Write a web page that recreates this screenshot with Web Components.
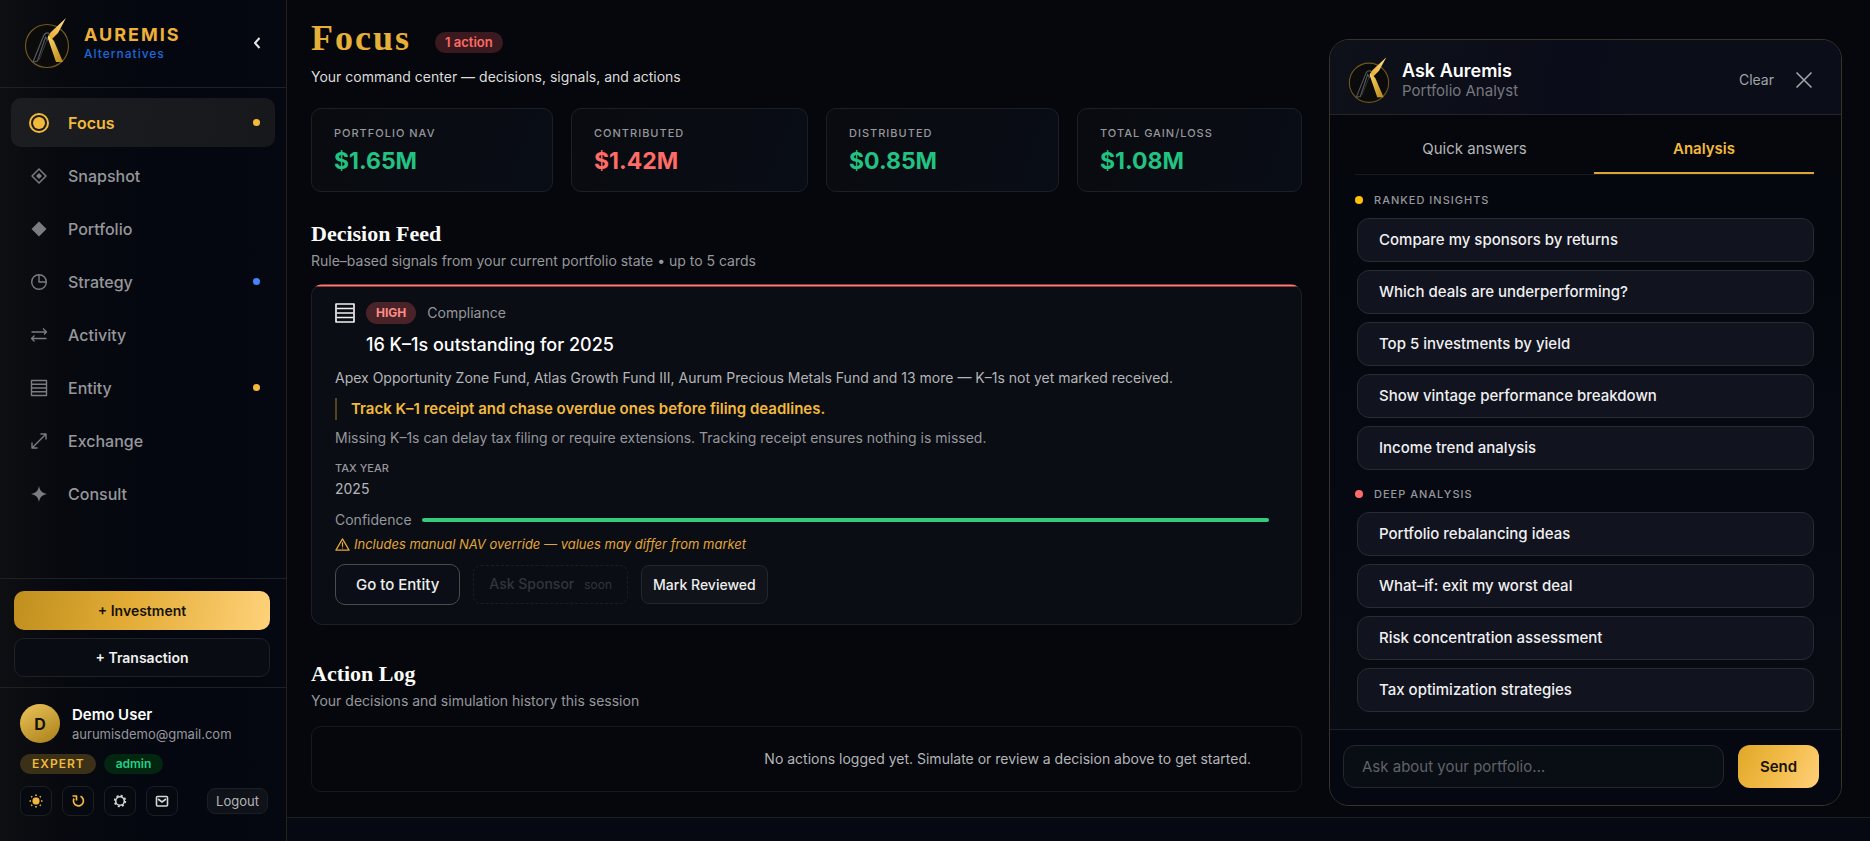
<!DOCTYPE html>
<html lang="en">
<head>
<meta charset="utf-8">
<meta name="viewport" content="width=device-width, initial-scale=1">
<title>Auremis Alternatives – Focus</title>
<style>
:root {
  --gold: #f3b93b;
  --red: #ff6b66;
  --green: #22c282;
  --text: #f1f1ef;
  --soft: #b4b5b7;
  --muted: #96979b;
  --line: #1d2024;
  --sans: Inter, "Noto Sans", sans-serif;
  --serif: "Liberation Serif", "Times New Roman", serif;
}
html { background: #05070c; }
body {
  margin: 0;
  font: 400 14px/20px var(--sans);
  color: var(--text);
  -webkit-font-smoothing: antialiased;
}
</style>
</head>
<body>
<auremis-app></auremis-app>

<script>
const define = (name, html) => {
  const template = document.createElement('template');
  template.innerHTML = '<style>*,*::before{box-sizing:border-box}button,input{font:inherit;color:inherit;margin:0}button{cursor:pointer}svg{display:block}</style>' + html;
  customElements.define(name, class extends HTMLElement {
    constructor() {
      super();
      this.attachShadow({ mode: 'open' }).append(template.content.cloneNode(true));
    }
  });
};

/* Single icon element; the glyph is picked with the "name" attribute. */
const ICONS = {
  focus: '<circle cx="12" cy="12" r="9" stroke-width="2"/><circle cx="12" cy="12" r="6" fill="currentColor" stroke="none"/>',
  snapshot: '<path d="M12 5l7 7-7 7-7-7z" stroke-width="1.5"/><path d="M12 9l3 3-3 3-3-3z" fill="currentColor" stroke="none"/>',
  portfolio: '<path d="M12 4.5l7.5 7.5-7.5 7.5L4.500 12z" fill="currentColor" stroke="none"/>',
  strategy: '<circle cx="12" cy="12" r="7.3"/><path d="M12 4.700V12h7.300"/>',
  activity: '<path d="M4.500 9H19.500M16 5.500L19.500 9l-2.500 2.500M19.500 15.500H4.500M7.500 12.500l-3 3 3 3" stroke-width="1.3"/>',
  entity: '<path d="M4.500 4.500h15v15h-15zM4.500 8.200h15M4.500 12h15M4.500 15.800h15"/>',
  exchange: '<path d="M5 19L19 5M13.500 5H19v5.500M5 13.500V19h5.500"/>',
  consult: '<path d="M12 4c1 5 3 7 8 8-5 1-7 3-8 8-1-5-3-7-8-8 5-1 7-3 8-8z" fill="currentColor" stroke="none"/>',
  chevron: '<path d="M13.500 7L9 12l4.500 5" stroke-width="2"/>',
  sun: '<rect x="9" y="9" width="6" height="6" rx="2" fill="currentColor" stroke-width="1"/><path d="M12 5.500v1.500M12 17v1.500M5.500 12h1.500M17 12h1.500M7.200 7.200l1 1M15.800 15.800l1 1M16.800 7.200l-1 1M8.200 15.800l-1 1" stroke-width="1.600"/>',
  refresh: '<path d="M8 9.500a5 5 0 1 0 6.500-2.200" stroke-width="1.700"/><path d="M6.500 7h4v4.500" stroke-width="1.700"/>',
  gear: '<circle cx="12" cy="12" r="4.300" stroke-width="1.600"/><circle cx="12" cy="12" r="5.400" stroke-width="1.600" stroke-dasharray="2.100 2.140"/>',
  mail: '<rect x="6.500" y="7.500" width="11" height="9.500" rx="1" stroke-width="1.600"/><path d="M8 10l4 3 4-3" stroke-width="1.600"/>',
  list: '<path d="M1.200 1.200h21.600v21.600H1.200z" stroke-width="2"/><path d="M2 6.600h20M2 12h20M2 17.400h20" stroke-width="2"/>',
  warning: '<path d="M12 3L22.500 21h-21z" stroke-width="2"/><path d="M12 8.500v7M12 17v1.500" stroke-width="2"/>',
  close: '<path d="M4.500 4.500l15 15M19.500 4.500l-15 15" stroke-width="1.600"/>'
};
customElements.define('au-icon', class extends HTMLElement {
  constructor() {
    super();
    this.attachShadow({ mode: 'open' });
  }
  connectedCallback() {
    this.shadowRoot.innerHTML = `<style>:host{display:block;width:24px;height:24px;flex:none}svg{display:block;width:100%;height:100%}</style>
      <svg viewBox="0 0 24 24" fill="none" stroke="currentColor" stroke-width="1.400" stroke-linejoin="round" aria-hidden="true">${ICONS[this.getAttribute('name')]}</svg>`;
  }
});

/* Brand mark: ringed "A" with a gold blade. */
define('au-logo', `
<style>:host{display:block;width:46px;height:52px;flex:none}svg{width:100%;height:100%}</style>
<svg viewBox="0 0 46 52" fill="none" aria-hidden="true">
  <defs>
    <linearGradient id="a" x1="0" y1="1" x2="1" y2="0"><stop offset="0" stop-color="#e9a92f"/><stop offset="1" stop-color="#ffe48c"/></linearGradient>
    <linearGradient id="b" x1="0" y1="0" x2="1" y2="1"><stop offset="0" stop-color="#ffd766"/><stop offset="1" stop-color="#b98718"/></linearGradient>
  </defs>
  <circle cx="23" cy="29" r="21.500" fill="#0b0b0c" stroke="#6e5720" stroke-width="1.200"/>
  <path d="M9 45L19.500 19q1.500-3.500 5-3l2 3-3 4-2-3-8 24z" stroke="#55585c" stroke-width="1.200"/>
  <path d="M15 43l8-20" stroke="#35383c"/>
  <path d="M42 1L27 15q-3 3-1 5l2 2 6-6z" fill="url(#a)"/>
  <path d="M24.500 18q-1.500 2.500 0 5L32 45h7L30 24q-2-2.500-5.500-6z" fill="url(#b)"/>
</svg>`);

define('au-nav-item', `
<style>
:host{display:block;color:var(--muted)}
a{display:flex;align-items:center;gap:17px;height:49px;padding:0 15px 0 16px;border-radius:10px;color:inherit;text-decoration:none;font-size:16px;font-weight:500}
.label{flex:1}
::slotted(au-icon){color:#7b7c80}
i{display:none;width:7px;height:7px;border-radius:50%;background:var(--gold)}
:host([dot]) i{display:block}
:host([dot=blue]) i{background:#4286f7}
:host([active]){color:var(--gold)}
:host([active]) ::slotted(au-icon){color:var(--gold)}
:host([active]) a{background:linear-gradient(100deg,#1c1d20,#16181b);font-weight:600}
</style>
<a href="#"><slot name="icon"></slot><span class="label"><slot></slot></span><i></i></a>`);

define('au-sidebar', `
<style>
:host{display:flex;flex-direction:column;border-right:1px solid #24211f;background:linear-gradient(90deg,#0e0f12 0,#07090f 22%,#040710 60%,#050811)}
header{display:flex;align-items:center;gap:14px;height:88px;padding:0 16px 2px 24px;border-bottom:1px solid var(--line)}
header div{flex:1}
.brand{font:700 18px/22px var(--sans);letter-spacing:2px;color:#eeb03a}
.sub{font:500 12px/16px var(--sans);letter-spacing:1px;color:#1c69dc}
.fold{padding:0;border:0;background:none;color:#e6e6e6}
nav{display:flex;flex-direction:column;gap:4px;flex:1;padding:10px 11px}
.actions{display:flex;flex-direction:column;gap:8px;padding:12px 16px 10px 14px;border-top:1px solid var(--line);border-bottom:1px solid var(--line)}
.actions button{height:39px;border-radius:10px;border:1px solid #1e2227;background:#090c13;font-size:14px;font-weight:600}
.actions .primary{border:0;background:linear-gradient(100deg,#bf8f1e,#e3ac36 45%,#ffd27a);color:#16130a}
.profile{height:153px;padding:16px 18px 0 20px}
.who{display:flex;align-items:center;gap:12px}
.avatar{display:grid;place-items:center;width:40px;height:39px;border-radius:50%;background:linear-gradient(150deg,#ecc45c,#a97f16);color:#15120a;font-size:16px;font-weight:700}
.name{font-size:15px;font-weight:600;line-height:20px;color:#fff}
.mail{font-size:13px;line-height:18px;color:var(--muted)}
.tags{display:flex;gap:8px;margin-top:11px}
.tags span{height:20px;padding:0 12px;border-radius:10px;font-size:12px;line-height:20px;font-weight:600;background:#3a3118;color:var(--gold)}
.tags .role{letter-spacing:1px;padding-right:11px}
.tags .admin{background:#02260f;color:#26cf87}
.tools{display:flex;align-items:center;gap:10px;margin-top:12px}
.tools button{display:grid;place-items:center;width:32px;height:30px;padding:0;border-radius:8px;border:1px solid #1b1f24;background:#06090f;color:#d5d5d5}
.tools .gold{color:var(--gold)}
.tools .logout{width:61px;height:26px;margin-left:auto;font-size:13px;background:#101219;color:var(--soft)}
</style>
<header>
  <au-logo></au-logo>
  <div><div class="brand">AUREMIS</div><div class="sub">Alternatives</div></div>
  <button class="fold" aria-label="Collapse sidebar"><au-icon name="chevron"></au-icon></button>
</header>
<nav aria-label="Main">
  <au-nav-item active dot><au-icon slot="icon" name="focus"></au-icon>Focus</au-nav-item>
  <au-nav-item><au-icon slot="icon" name="snapshot"></au-icon>Snapshot</au-nav-item>
  <au-nav-item><au-icon slot="icon" name="portfolio"></au-icon>Portfolio</au-nav-item>
  <au-nav-item dot="blue"><au-icon slot="icon" name="strategy"></au-icon>Strategy</au-nav-item>
  <au-nav-item><au-icon slot="icon" name="activity"></au-icon>Activity</au-nav-item>
  <au-nav-item dot><au-icon slot="icon" name="entity"></au-icon>Entity</au-nav-item>
  <au-nav-item><au-icon slot="icon" name="exchange"></au-icon>Exchange</au-nav-item>
  <au-nav-item><au-icon slot="icon" name="consult"></au-icon>Consult</au-nav-item>
</nav>
<div class="actions">
  <button class="primary">+ Investment</button>
  <button>+ Transaction</button>
</div>
<div class="profile">
  <div class="who"><div class="avatar">D</div><div><div class="name">Demo User</div><div class="mail">aurumisdemo@gmail.com</div></div></div>
  <div class="tags"><span class="role">EXPERT</span><span class="admin">admin</span></div>
  <div class="tools">
    <button class="gold" aria-label="Theme"><au-icon name="sun"></au-icon></button>
    <button class="gold" aria-label="Refresh"><au-icon name="refresh"></au-icon></button>
    <button aria-label="Settings"><au-icon name="gear"></au-icon></button>
    <button aria-label="Messages"><au-icon name="mail"></au-icon></button>
    <button class="logout">Logout</button>
  </div>
</div>`);

define('au-stat', `
<style>
:host{display:flex;flex-direction:column;justify-content:center;gap:6px;height:84px;padding:0 22px;border:1px solid #1c1f25;border-radius:10px;background:linear-gradient(110deg,#090b0f,#090d16)}
.label{font:500 11px/16px var(--sans);letter-spacing:1px;color:var(--muted)}
.value{font:700 23px/28px var(--sans);color:var(--green)}
:host([negative]) .value{color:var(--red)}
</style>
<div class="label"><slot name="label"></slot></div><div class="value"><slot></slot></div>`);

define('au-section-head', `
<style>
:host{display:block}
h2{margin:0;font:700 22px/28px var(--serif);color:#fbfbf8}
p{margin:3px 0 0;color:var(--muted)}
</style>
<h2><slot></slot></h2><p><slot name="note"></slot></p>`);

define('au-decision-card', `
<style>
:host{display:block;overflow:hidden;border-radius:12px;box-shadow:inset 0 0 0 1px #1c1f24;background:#0a0d14}
.accent{height:3px;background:linear-gradient(#8f3a3a 33%,#f4807b 33% 66%,#8f3a3a 66%)}
.body{padding:15px 33px 20px 24px}
.top{display:flex;align-items:center;gap:11px;height:22px}
.top au-icon{width:20px;height:20px}
.high{padding:0 10px;border-radius:11px;background:#4a2328;color:#ff8c86;font-size:12px;line-height:22px;font-weight:700}
.cat{color:var(--muted)}
h3{margin:9px 0 11px 31px;font-size:18px;line-height:24px;font-weight:500;color:#fff}
p{margin:0;color:var(--soft)}
.track{margin:10px 0 8px;padding-left:14px;border-left:2px solid #5a431a;font-size:15px;line-height:22px;font-weight:600;color:var(--gold)}
.why{color:var(--muted)}
dl{margin:12px 0 11px}
dt{font:500 11px/16px var(--sans);color:var(--muted)}
dd{margin:3px 0 0;color:var(--soft)}
.conf{display:flex;align-items:center;gap:10px;color:var(--muted)}
.meter{flex:1;height:4px;border-radius:2px;background:#34cb7f}
.warn{display:flex;align-items:center;gap:4px;margin-top:4px;font-size:13px;font-style:italic;color:#e2a637}
.warn au-icon{width:15px;height:15px}
.buttons{display:flex;align-items:center;gap:13px;margin-top:10px}
button{height:39px;padding:0 11px;border:1px solid #23272d;border-radius:8px;background:#10131a;font-weight:500;font-size:14px;color:#eeeeec}
.go{height:41px;padding:0 20px;border-color:#484b50;border-radius:10px;background:#0b0e16;font-size:15px}
.ask{padding:0 15px;border:1px dashed #1b1e23;background:none;color:#32353b;cursor:default}
.ask small{margin-left:10px;font-size:12px;font-weight:400}
</style>
<div class="accent"></div>
<div class="body">
  <div class="top"><au-icon name="list"></au-icon><span class="high">HIGH</span><span class="cat">Compliance</span></div>
  <h3>16 K–1s outstanding for 2025</h3>
  <p>Apex Opportunity Zone Fund, Atlas Growth Fund III, Aurum Precious Metals Fund and 13 more — K–1s not yet marked received.</p>
  <p class="track">Track K–1 receipt and chase overdue ones before filing deadlines.</p>
  <p class="why">Missing K–1s can delay tax filing or require extensions. Tracking receipt ensures nothing is missed.</p>
  <dl><dt>TAX YEAR</dt><dd>2025</dd></dl>
  <div class="conf"><span>Confidence</span><div class="meter" role="meter" aria-label="Confidence" aria-valuenow="100"></div></div>
  <div class="warn"><au-icon name="warning"></au-icon><span>Includes manual NAV override — values may differ from market</span></div>
  <div class="buttons"><button class="go">Go to Entity</button><button class="ask" disabled>Ask Sponsor<small>soon</small></button><button>Mark Reviewed</button></div>
</div>`);

define('au-focus-view', `
<style>
:host{display:block;padding:16px 0 24px}
.title{display:flex;align-items:flex-start;gap:24px}
h1{margin:0;font:700 36px/44px var(--serif);letter-spacing:2px;color:#e5af38}
.count{margin-top:16px;padding:0 10px;border-radius:11px;background:#3b1a1f;color:var(--red);font-size:13px;line-height:21px;font-weight:600}
.lead{margin:7px 0 21px;color:#dcdcda}
.stats{display:grid;grid-template-columns:242fr 237fr 233fr 225fr;gap:18px}
au-section-head{margin:28px 0 13px}
au-section-head.log{margin:35px 0 15px}
.empty{display:flex;align-items:center;justify-content:flex-end;height:66px;padding-right:50px;border:1px solid #16191d;border-radius:10px;color:var(--soft)}
</style>
<div class="title"><h1>Focus</h1><span class="count">1 action</span></div>
<p class="lead">Your command center — decisions, signals, and actions</p>
<div class="stats">
  <au-stat><span slot="label">PORTFOLIO NAV</span>$1.65M</au-stat>
  <au-stat negative><span slot="label">CONTRIBUTED</span>$1.42M</au-stat>
  <au-stat><span slot="label">DISTRIBUTED</span>$0.85M</au-stat>
  <au-stat><span slot="label">TOTAL GAIN/LOSS</span>$1.08M</au-stat>
</div>
<au-section-head>Decision Feed<span slot="note">Rule–based signals from your current portfolio state • up to 5 cards</span></au-section-head>
<au-decision-card></au-decision-card>
<au-section-head class="log">Action Log<span slot="note">Your decisions and simulation history this session</span></au-section-head>
<div class="empty">No actions logged yet. Simulate or review a decision above to get started.</div>`);

define('au-prompt-group', `
<style>
:host{display:block}
.label{display:flex;align-items:center;gap:11px;margin-bottom:10px;font:500 11px/16px var(--sans);letter-spacing:1px;color:var(--muted)}
.label::before{content:"";width:8px;height:8px;border-radius:50%;background:#ffc107}
:host([tone=red]) .label::before{background:var(--red)}
.items{display:flex;flex-direction:column;gap:8px;padding-left:2px}
</style>
<div class="label"><slot name="label"></slot></div><div class="items"><slot></slot></div>`);

define('au-prompt', `
<style>
:host{display:block}
button{display:block;width:100%;height:44px;padding:0 21px;border:1px solid #2a2a31;border-radius:12px;background:#11131e;font-size:15px;font-weight:500;text-align:left;color:#f0f0f2}
</style>
<button><slot></slot></button>`);

define('au-assistant', `
<style>
:host{display:flex;flex-direction:column;overflow:hidden;border:1px solid #37322a;border-radius:20px;background:linear-gradient(180deg,#04060b,#060912 60%,#090c12)}
header{display:flex;align-items:center;height:75px;padding:6px 25px 0 18px;border-bottom:1px solid #24252a;background:linear-gradient(100deg,#0e1119,#0b0c19 45%,#0b0e18)}
header au-logo{width:42px;height:48px;margin-right:12px}
header div{flex:1}
h2{margin:0;font-size:18px;line-height:22px;font-weight:600;color:#fff}
header p{margin:0;font-size:15px;line-height:18px;color:#77787e}
header button{padding:0;border:0;background:none;color:#a2a3a7}
header button+button{margin-left:18px}
.tabs{display:grid;grid-template-columns:239fr 220fr;margin:0 27px 0 25px;height:60px;border-bottom:1px solid #17191e}
.tabs button{border:0;border-bottom:2px solid transparent;background:none;padding:11px 0 0;font-size:15px;color:var(--soft)}
.tabs [aria-selected=true]{border-color:#d9a636;font-weight:600;color:var(--gold)}
.lists{flex:1;display:flex;flex-direction:column;gap:16px;padding:17px 27px 17px 25px}
form{display:flex;gap:14px;padding:15px 22px 17px 13px;border-top:1px solid #1e2025;background:#050810}
input{flex:1;min-width:0;height:43px;padding:0 18px;border:1px solid #24272c;border-radius:12px;background:#090d14;font-size:15px}
input::placeholder{color:#606268;opacity:1}
form button{width:81px;height:43px;border:0;border-radius:12px;background:linear-gradient(120deg,#e0a828,#f2bb48 50%,#ffd07a);font-size:15px;font-weight:600;color:#17130a}
</style>
<header>
  <au-logo></au-logo>
  <div><h2>Ask Auremis</h2><p>Portfolio Analyst</p></div>
  <button>Clear</button>
  <button aria-label="Close"><au-icon name="close"></au-icon></button>
</header>
<div class="tabs" role="tablist">
  <button role="tab" aria-selected="false">Quick answers</button>
  <button role="tab" aria-selected="true">Analysis</button>
</div>
<div class="lists">
  <au-prompt-group><span slot="label">RANKED INSIGHTS</span>
    <au-prompt>Compare my sponsors by returns</au-prompt>
    <au-prompt>Which deals are underperforming?</au-prompt>
    <au-prompt>Top 5 investments by yield</au-prompt>
    <au-prompt>Show vintage performance breakdown</au-prompt>
    <au-prompt>Income trend analysis</au-prompt>
  </au-prompt-group>
  <au-prompt-group tone="red"><span slot="label">DEEP ANALYSIS</span>
    <au-prompt>Portfolio rebalancing ideas</au-prompt>
    <au-prompt>What–if: exit my worst deal</au-prompt>
    <au-prompt>Risk concentration assessment</au-prompt>
    <au-prompt>Tax optimization strategies</au-prompt>
  </au-prompt-group>
</div>
<form onsubmit="return false">
  <input type="text" aria-label="Ask about your portfolio" placeholder="Ask about your portfolio…">
  <button>Send</button>
</form>`);

define('auremis-app', `
<style>
:host{display:grid;grid-template-columns:287px minmax(0,1fr);min-height:100vh;background:#05070c}
.page{display:flex;flex-direction:column}
main{display:grid;grid-template-columns:minmax(0,1fr) 513px;gap:27px;flex:1;padding:0 28px 0 24px}
au-focus-view{min-width:0}
au-assistant{margin:39px 0 11px}
footer{height:24px;border-top:1px solid #1e1f22;background:#060912}
</style>
<au-sidebar></au-sidebar>
<div class="page">
  <main><au-focus-view></au-focus-view><au-assistant></au-assistant></main>
  <footer></footer>
</div>`);
</script>
</body>
</html>
